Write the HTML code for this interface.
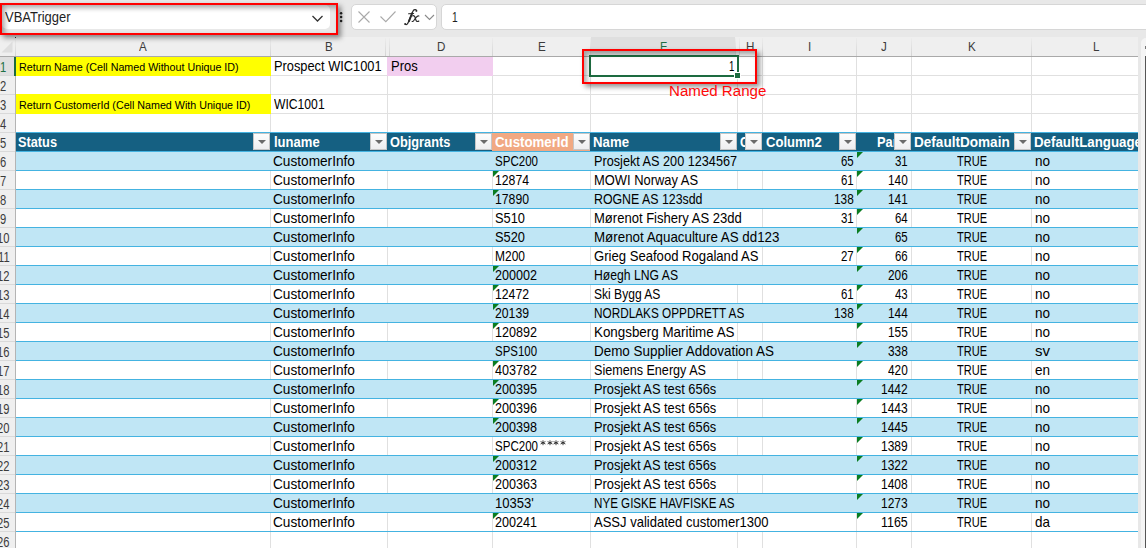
<!DOCTYPE html><html><head><meta charset="utf-8"><style>
*{margin:0;padding:0;box-sizing:border-box}
html,body{width:1146px;height:548px;overflow:hidden;background:#fff}
body{position:relative;font-family:"Liberation Sans",sans-serif;color:#000}
.a{position:absolute}
.t{position:absolute;white-space:nowrap;line-height:19px;transform-origin:0 0}
.hl{position:absolute;height:1px}
.vl{position:absolute;width:1px}
.fb{position:absolute;width:17px;height:17px;border:1px solid #c6c6c6;background:linear-gradient(#fdfdfd,#eeeef0)}
.fb:after{content:"";position:absolute;left:3.6px;top:6.2px;border-left:4.1px solid transparent;border-right:4.1px solid transparent;border-top:4.6px solid #6b6b6b}
.tri{position:absolute;width:0;height:0;border-top:6px solid #0a7d22;border-right:6px solid transparent}
</style></head><body>

<div class="a" style="left:0;top:0;width:1146px;height:37px;background:#e8e8e8"></div>
<div class="a" style="left:2px;top:5px;width:328px;height:24px;background:#fff;border-radius:5px"></div>
<div class="t" style="left:5.20px;top:8px;font-size:14.5px;transform:scaleX(0.8936);color:#1f1f1f;">VBATrigger</div>
<svg class="a" style="left:311px;top:13px" width="13" height="10" viewBox="0 0 13 10"><path d="M1.5 3 L6.5 8 L11.5 3" fill="none" stroke="#333" stroke-width="1.3"/></svg>
<svg class="a" style="left:338px;top:10px" width="6" height="15" viewBox="0 0 6 15"><circle cx="3.1" cy="3.2" r="1.25" fill="#222"/><circle cx="3.1" cy="7.1" r="1.25" fill="#222"/><circle cx="3.1" cy="11" r="1.25" fill="#222"/></svg>
<div class="a" style="left:351px;top:4px;width:86px;height:26px;background:#fff;border-radius:5px;border:1px solid #d6d6d6"></div>
<svg class="a" style="left:352px;top:4px" width="85" height="26" viewBox="0 0 85 26"><path d="M6.5 7.5 L17.5 18.5 M17.5 7.5 L6.5 18.5" stroke="#a9a9a9" stroke-width="1.1" fill="none"/><path d="M28.5 12.5 L33.8 17.6 L43.5 7.5" stroke="#a9a9a9" stroke-width="1.1" fill="none"/><path d="M73 11 L77.5 15.5 L82 11" stroke="#8a8a8a" stroke-width="1.1" fill="none"/></svg>
<svg class="a" style="left:398px;top:4px" width="40" height="26" viewBox="0 0 40 26"><g fill="none" stroke="#2a2a2a" stroke-linecap="round"><path d="M18.6 6.6 C18 5.3 15.8 5.2 14.8 7.4 L10.2 18.6 C9.3 20.8 8 21 7 20.1" stroke-width="1.2"/><path d="M14.2 9.2 L11 17.2" stroke-width="1.9"/><circle cx="18.4" cy="6.9" r="0.9" fill="#2a2a2a" stroke="none"/><circle cx="7.2" cy="20" r="0.9" fill="#2a2a2a" stroke="none"/><path d="M10.6 9.7 L15.6 9.5" stroke-width="1.1"/><path d="M14.8 11.9 C15.9 11.3 16.7 12 17.1 13.3 L17.9 16.1 C18.3 17.4 19.1 17.9 20.8 17.1" stroke-width="1.2"/><path d="M20.9 12 C19.9 11.6 19 12.3 17.9 13.7 L16.2 16 C15.4 17.2 14.7 17.9 14.1 17.3" stroke-width="1.1"/></g></svg>
<div class="a" style="left:441px;top:4px;width:720px;height:26px;background:#fff;border-radius:5px;border:1px solid #d6d6d6"></div>
<div class="t" style="left:452.30px;top:8px;font-size:14.5px;transform:scaleX(0.7037);color:#1f1f1f;">1</div>
<div class="a" style="left:0;top:37px;width:1146px;height:19px;background:#efefef"></div>
<div class="a" style="left:591px;top:37px;width:144px;height:19px;background:#dfdfdf"></div>
<svg class="a" style="left:0;top:40px" width="14" height="14" viewBox="0 0 14 14"><path d="M12.5 1.5 L12.5 12.5 L1.5 12.5 Z" fill="#dedede"/></svg>
<div class="t" style="left:139.13px;top:37px;font-size:13.5px;transform:scaleX(0.8600);color:#3b3b3b;">A</div>
<div class="t" style="left:324.63px;top:37px;font-size:13.5px;transform:scaleX(0.8600);color:#3b3b3b;">B</div>
<div class="t" style="left:436.79px;top:37px;font-size:13.5px;transform:scaleX(0.8600);color:#3b3b3b;">D</div>
<div class="t" style="left:537.63px;top:37px;font-size:13.5px;transform:scaleX(0.8600);color:#3b3b3b;">E</div>
<div class="t" style="left:659.97px;top:37px;font-size:13.5px;transform:scaleX(0.8600);color:#1d7044;">F</div>
<div class="t" style="left:746.29px;top:37px;font-size:13.5px;transform:scaleX(0.8600);color:#3b3b3b;">H</div>
<div class="t" style="left:807.87px;top:37px;font-size:13.5px;transform:scaleX(0.8600);color:#3b3b3b;">I</div>
<div class="t" style="left:881.08px;top:37px;font-size:13.5px;transform:scaleX(0.8600);color:#3b3b3b;">J</div>
<div class="t" style="left:967.63px;top:37px;font-size:13.5px;transform:scaleX(0.8600);color:#3b3b3b;">K</div>
<div class="t" style="left:1093.28px;top:37px;font-size:13.5px;transform:scaleX(0.8600);color:#3b3b3b;">L</div>
<div class="vl" style="left:15px;top:38px;height:18px;background:linear-gradient(#ececec,#d4d4d4)"></div>
<div class="vl" style="left:270px;top:38px;height:18px;background:linear-gradient(#ececec,#d4d4d4)"></div>
<div class="vl" style="left:385px;top:38px;height:18px;background:linear-gradient(#ececec,#d4d4d4)"></div>
<div class="vl" style="left:389px;top:38px;height:18px;background:linear-gradient(#ececec,#d4d4d4)"></div>
<div class="vl" style="left:492px;top:38px;height:18px;background:linear-gradient(#ececec,#d4d4d4)"></div>
<div class="vl" style="left:590px;top:38px;height:18px;background:linear-gradient(#ececec,#d4d4d4)"></div>
<div class="vl" style="left:735px;top:38px;height:18px;background:linear-gradient(#ececec,#d4d4d4)"></div>
<div class="vl" style="left:739px;top:38px;height:18px;background:linear-gradient(#ececec,#d4d4d4)"></div>
<div class="vl" style="left:762px;top:38px;height:18px;background:linear-gradient(#ececec,#d4d4d4)"></div>
<div class="vl" style="left:856px;top:38px;height:18px;background:linear-gradient(#ececec,#d4d4d4)"></div>
<div class="vl" style="left:911px;top:38px;height:18px;background:linear-gradient(#ececec,#d4d4d4)"></div>
<div class="vl" style="left:1031px;top:38px;height:18px;background:linear-gradient(#ececec,#d4d4d4)"></div>
<div class="hl" style="left:0;top:56px;width:1138px;background:#a9a9a9"></div>
<div class="a" style="left:15px;top:37px;width:1px;height:1px;background:#333"></div>
<div class="a" style="left:0;top:57px;width:15px;height:491px;background:#efefef"></div>
<div class="a" style="left:0;top:57px;width:15px;height:18px;background:#dfdfdf"></div>
<div class="a" style="left:0;top:0;width:15px;height:548px;overflow:hidden">
<div class="t" style="left:0.38px;top:58px;font-size:14px;transform:scaleX(0.8);color:#1d7044">1</div>
<div class="hl" style="left:0;top:75px;width:15px;background:#d9d9d9"></div>
<div class="t" style="left:0.38px;top:77px;font-size:14px;transform:scaleX(0.8);color:#3b3b3b">2</div>
<div class="hl" style="left:0;top:94px;width:15px;background:#d9d9d9"></div>
<div class="t" style="left:0.38px;top:96px;font-size:14px;transform:scaleX(0.8);color:#3b3b3b">3</div>
<div class="hl" style="left:0;top:113px;width:15px;background:#d9d9d9"></div>
<div class="t" style="left:0.38px;top:115px;font-size:14px;transform:scaleX(0.8);color:#3b3b3b">4</div>
<div class="hl" style="left:0;top:132px;width:15px;background:#d9d9d9"></div>
<div class="t" style="left:0.38px;top:134px;font-size:14px;transform:scaleX(0.8);color:#3b3b3b">5</div>
<div class="hl" style="left:0;top:151px;width:15px;background:#d9d9d9"></div>
<div class="t" style="left:0.38px;top:153px;font-size:14px;transform:scaleX(0.8);color:#3b3b3b">6</div>
<div class="hl" style="left:0;top:170px;width:15px;background:#d9d9d9"></div>
<div class="t" style="left:0.38px;top:172px;font-size:14px;transform:scaleX(0.8);color:#3b3b3b">7</div>
<div class="hl" style="left:0;top:189px;width:15px;background:#d9d9d9"></div>
<div class="t" style="left:0.38px;top:191px;font-size:14px;transform:scaleX(0.8);color:#3b3b3b">8</div>
<div class="hl" style="left:0;top:208px;width:15px;background:#d9d9d9"></div>
<div class="t" style="left:0.38px;top:210px;font-size:14px;transform:scaleX(0.8);color:#3b3b3b">9</div>
<div class="hl" style="left:0;top:227px;width:15px;background:#d9d9d9"></div>
<div class="t" style="left:-2.74px;top:229px;font-size:14px;transform:scaleX(0.8);color:#3b3b3b">10</div>
<div class="hl" style="left:0;top:246px;width:15px;background:#d9d9d9"></div>
<div class="t" style="left:-2.30px;top:248px;font-size:14px;transform:scaleX(0.8);color:#3b3b3b">11</div>
<div class="hl" style="left:0;top:265px;width:15px;background:#d9d9d9"></div>
<div class="t" style="left:-2.74px;top:267px;font-size:14px;transform:scaleX(0.8);color:#3b3b3b">12</div>
<div class="hl" style="left:0;top:284px;width:15px;background:#d9d9d9"></div>
<div class="t" style="left:-2.74px;top:286px;font-size:14px;transform:scaleX(0.8);color:#3b3b3b">13</div>
<div class="hl" style="left:0;top:303px;width:15px;background:#d9d9d9"></div>
<div class="t" style="left:-2.74px;top:305px;font-size:14px;transform:scaleX(0.8);color:#3b3b3b">14</div>
<div class="hl" style="left:0;top:322px;width:15px;background:#d9d9d9"></div>
<div class="t" style="left:-2.74px;top:324px;font-size:14px;transform:scaleX(0.8);color:#3b3b3b">15</div>
<div class="hl" style="left:0;top:341px;width:15px;background:#d9d9d9"></div>
<div class="t" style="left:-2.74px;top:343px;font-size:14px;transform:scaleX(0.8);color:#3b3b3b">16</div>
<div class="hl" style="left:0;top:360px;width:15px;background:#d9d9d9"></div>
<div class="t" style="left:-2.74px;top:362px;font-size:14px;transform:scaleX(0.8);color:#3b3b3b">17</div>
<div class="hl" style="left:0;top:379px;width:15px;background:#d9d9d9"></div>
<div class="t" style="left:-2.74px;top:381px;font-size:14px;transform:scaleX(0.8);color:#3b3b3b">18</div>
<div class="hl" style="left:0;top:398px;width:15px;background:#d9d9d9"></div>
<div class="t" style="left:-2.74px;top:400px;font-size:14px;transform:scaleX(0.8);color:#3b3b3b">19</div>
<div class="hl" style="left:0;top:417px;width:15px;background:#d9d9d9"></div>
<div class="t" style="left:-2.74px;top:419px;font-size:14px;transform:scaleX(0.8);color:#3b3b3b">20</div>
<div class="hl" style="left:0;top:436px;width:15px;background:#d9d9d9"></div>
<div class="t" style="left:-2.74px;top:438px;font-size:14px;transform:scaleX(0.8);color:#3b3b3b">21</div>
<div class="hl" style="left:0;top:455px;width:15px;background:#d9d9d9"></div>
<div class="t" style="left:-2.74px;top:457px;font-size:14px;transform:scaleX(0.8);color:#3b3b3b">22</div>
<div class="hl" style="left:0;top:474px;width:15px;background:#d9d9d9"></div>
<div class="t" style="left:-2.74px;top:476px;font-size:14px;transform:scaleX(0.8);color:#3b3b3b">23</div>
<div class="hl" style="left:0;top:493px;width:15px;background:#d9d9d9"></div>
<div class="t" style="left:-2.74px;top:495px;font-size:14px;transform:scaleX(0.8);color:#3b3b3b">24</div>
<div class="hl" style="left:0;top:512px;width:15px;background:#d9d9d9"></div>
<div class="t" style="left:-2.74px;top:514px;font-size:14px;transform:scaleX(0.8);color:#3b3b3b">25</div>
<div class="hl" style="left:0;top:531px;width:15px;background:#d9d9d9"></div>
<div class="t" style="left:-2.74px;top:533px;font-size:14px;transform:scaleX(0.8);color:#3b3b3b">26</div>
<div class="hl" style="left:0;top:550px;width:15px;background:#d9d9d9"></div>
</div>
<div class="vl" style="left:15px;top:57px;height:491px;background:#b4b4b4"></div>
<div class="a" style="left:14px;top:57px;width:2px;height:19px;background:#1d6b40"></div>
<div class="hl" style="left:16px;top:75px;width:1122px;background:#e0e0e0"></div>
<div class="hl" style="left:16px;top:94px;width:1122px;background:#e0e0e0"></div>
<div class="hl" style="left:16px;top:113px;width:1122px;background:#e0e0e0"></div>
<div class="hl" style="left:16px;top:132px;width:1122px;background:#e0e0e0"></div>
<div class="vl" style="left:270px;top:57px;height:491px;background:#e0e0e0"></div>
<div class="vl" style="left:387px;top:57px;height:491px;background:#e0e0e0"></div>
<div class="vl" style="left:492px;top:57px;height:491px;background:#e0e0e0"></div>
<div class="vl" style="left:590px;top:57px;height:491px;background:#e0e0e0"></div>
<div class="vl" style="left:737px;top:57px;height:491px;background:#e0e0e0"></div>
<div class="vl" style="left:762px;top:57px;height:491px;background:#e0e0e0"></div>
<div class="vl" style="left:856px;top:57px;height:491px;background:#e0e0e0"></div>
<div class="vl" style="left:911px;top:57px;height:491px;background:#e0e0e0"></div>
<div class="vl" style="left:1031px;top:57px;height:491px;background:#e0e0e0"></div>
<div class="vl" style="left:737px;top:209px;height:18px;background:#fff"></div>
<div class="vl" style="left:737px;top:247px;height:18px;background:#fff"></div>
<div class="vl" style="left:737px;top:513px;height:18px;background:#fff"></div>
<div class="vl" style="left:762px;top:513px;height:18px;background:#fff"></div>
<div class="a" style="left:16px;top:56px;width:255px;height:20px;background:#ffff00"></div>
<div class="a" style="left:16px;top:94px;width:255px;height:20px;background:#ffff00"></div>
<div class="a" style="left:387px;top:56px;width:106px;height:20px;background:#f2ceef"></div>
<div class="hl" style="left:16px;top:56px;width:1122px;background:#a9a9a9"></div>
<div class="t" style="left:19.00px;top:58px;font-size:11.5px;transform:scaleX(0.9313);">Return Name (Cell Named Without Unique ID)</div>
<div class="t" style="left:19.00px;top:96px;font-size:11.5px;transform:scaleX(0.9304);">Return CustomerId (Cell Named With Unique ID)</div>
<div class="t" style="left:273.50px;top:57px;font-size:14.5px;transform:scaleX(0.8841);">Prospect WIC1001</div>
<div class="t" style="left:390.50px;top:57px;font-size:14.5px;transform:scaleX(0.8960);">Pros</div>
<div class="t" style="left:273.50px;top:95px;font-size:14.5px;transform:scaleX(0.8377);">WIC1001</div>
<div class="t" style="left:728.70px;top:57px;font-size:14.5px;transform:scaleX(0.6667);">1</div>
<div class="a" style="left:16px;top:132px;width:1122px;height:20px;background:#156082"></div>
<div class="a" style="left:492px;top:132px;width:98px;height:20px;background:#f1a983"></div>
<div class="a" style="left:16px;top:151px;width:1122px;height:20px;background:#c0e6f5"></div>
<div class="a" style="left:16px;top:189px;width:1122px;height:20px;background:#c0e6f5"></div>
<div class="a" style="left:16px;top:227px;width:1122px;height:20px;background:#c0e6f5"></div>
<div class="a" style="left:16px;top:265px;width:1122px;height:20px;background:#c0e6f5"></div>
<div class="a" style="left:16px;top:303px;width:1122px;height:20px;background:#c0e6f5"></div>
<div class="a" style="left:16px;top:341px;width:1122px;height:20px;background:#c0e6f5"></div>
<div class="a" style="left:16px;top:379px;width:1122px;height:20px;background:#c0e6f5"></div>
<div class="a" style="left:16px;top:417px;width:1122px;height:20px;background:#c0e6f5"></div>
<div class="a" style="left:16px;top:455px;width:1122px;height:20px;background:#c0e6f5"></div>
<div class="a" style="left:16px;top:493px;width:1122px;height:20px;background:#c0e6f5"></div>
<div class="hl" style="left:16px;top:132px;width:1122px;background:#44b3e1"></div>
<div class="hl" style="left:16px;top:151px;width:1122px;background:#44b3e1"></div>
<div class="hl" style="left:16px;top:170px;width:1122px;background:#44b3e1"></div>
<div class="hl" style="left:16px;top:189px;width:1122px;background:#44b3e1"></div>
<div class="hl" style="left:16px;top:208px;width:1122px;background:#44b3e1"></div>
<div class="hl" style="left:16px;top:227px;width:1122px;background:#44b3e1"></div>
<div class="hl" style="left:16px;top:246px;width:1122px;background:#44b3e1"></div>
<div class="hl" style="left:16px;top:265px;width:1122px;background:#44b3e1"></div>
<div class="hl" style="left:16px;top:284px;width:1122px;background:#44b3e1"></div>
<div class="hl" style="left:16px;top:303px;width:1122px;background:#44b3e1"></div>
<div class="hl" style="left:16px;top:322px;width:1122px;background:#44b3e1"></div>
<div class="hl" style="left:16px;top:341px;width:1122px;background:#44b3e1"></div>
<div class="hl" style="left:16px;top:360px;width:1122px;background:#44b3e1"></div>
<div class="hl" style="left:16px;top:379px;width:1122px;background:#44b3e1"></div>
<div class="hl" style="left:16px;top:398px;width:1122px;background:#44b3e1"></div>
<div class="hl" style="left:16px;top:417px;width:1122px;background:#44b3e1"></div>
<div class="hl" style="left:16px;top:436px;width:1122px;background:#44b3e1"></div>
<div class="hl" style="left:16px;top:455px;width:1122px;background:#44b3e1"></div>
<div class="hl" style="left:16px;top:474px;width:1122px;background:#44b3e1"></div>
<div class="hl" style="left:16px;top:493px;width:1122px;background:#44b3e1"></div>
<div class="hl" style="left:16px;top:512px;width:1122px;background:#44b3e1"></div>
<div class="hl" style="left:16px;top:531px;width:1122px;background:#44b3e1"></div>
<div class="a" style="left:16px;top:0;width:1122px;height:548px;overflow:hidden">
<div class="t" style="left:2.40px;top:133px;font-size:14.5px;font-weight:bold;color:#fff;transform:scaleX(0.8804)">Status</div>
<div class="t" style="left:257.60px;top:133px;font-size:14.5px;font-weight:bold;color:#fff;transform:scaleX(0.8996)">luname</div>
<div class="t" style="left:374.30px;top:133px;font-size:14.5px;font-weight:bold;color:#fff;transform:scaleX(0.8803)">Objgrants</div>
<div class="t" style="left:479.40px;top:133px;font-size:14.5px;font-weight:bold;color:#fff;transform:scaleX(0.9132)">CustomerId</div>
<div class="t" style="left:577.30px;top:133px;font-size:14.5px;font-weight:bold;color:#fff;transform:scaleX(0.9114)">Name</div>
<div class="a" style="left:0;top:0;width:730px;height:548px;overflow:hidden">
<div class="t" style="left:724.40px;top:133px;font-size:14.5px;font-weight:bold;color:#fff;transform:scaleX(0.8387)">Column1</div>
</div>
<div class="t" style="left:749.60px;top:133px;font-size:14.5px;font-weight:bold;color:#fff;transform:scaleX(0.9000)">Column2</div>
<div class="a" style="left:0;top:0;width:878px;height:548px;overflow:hidden">
<div class="t" style="left:861.30px;top:133px;font-size:14.5px;font-weight:bold;color:#fff;transform:scaleX(0.8869)">Parent</div>
</div>
<div class="t" style="left:898.00px;top:133px;font-size:14.5px;font-weight:bold;color:#fff;transform:scaleX(0.9355)">DefaultDomain</div>
<div class="t" style="left:1018.10px;top:133px;font-size:14.5px;font-weight:bold;color:#fff;transform:scaleX(0.9184)">DefaultLanguage</div>
</div>
<div class="fb" style="left:253px;top:133px"></div>
<div class="fb" style="left:370px;top:133px"></div>
<div class="fb" style="left:475px;top:133px"></div>
<div class="fb" style="left:573px;top:133px"></div>
<div class="fb" style="left:720px;top:133px"></div>
<div class="fb" style="left:745px;top:133px"></div>
<div class="fb" style="left:839px;top:133px"></div>
<div class="fb" style="left:894px;top:133px"></div>
<div class="fb" style="left:1014px;top:133px"></div>
<div class="t" style="left:273.40px;top:152px;font-size:14.5px;transform:scaleX(0.9414);">CustomerInfo</div>
<div class="t" style="left:495.00px;top:152px;font-size:14.5px;transform:scaleX(0.7963);">SPC200</div>
<div class="t" style="left:593.50px;top:152px;font-size:14.5px;transform:scaleX(0.8741);">Prosjekt AS 200 1234567</div>
<div class="t" style="left:840.70px;top:152px;font-size:14.5px;transform:scaleX(0.7888);">65</div>
<div class="t" style="left:895.40px;top:152px;font-size:14.5px;transform:scaleX(0.7888);">31</div>
<div class="t" style="left:956.60px;top:152px;font-size:14.5px;transform:scaleX(0.7595);">TRUE</div>
<div class="t" style="left:1034.60px;top:152px;font-size:14.5px;transform:scaleX(0.9317);">no</div>
<div class="tri" style="left:857px;top:152px"></div>
<div class="t" style="left:273.40px;top:171px;font-size:14.5px;transform:scaleX(0.9414);">CustomerInfo</div>
<div class="t" style="left:495.00px;top:171px;font-size:14.5px;transform:scaleX(0.8437);">12874</div>
<div class="t" style="left:593.50px;top:171px;font-size:14.5px;transform:scaleX(0.8904);">MOWI Norway AS</div>
<div class="t" style="left:840.70px;top:171px;font-size:14.5px;transform:scaleX(0.7888);">61</div>
<div class="t" style="left:888.40px;top:171px;font-size:14.5px;transform:scaleX(0.8140);">140</div>
<div class="t" style="left:956.60px;top:171px;font-size:14.5px;transform:scaleX(0.7595);">TRUE</div>
<div class="t" style="left:1034.60px;top:171px;font-size:14.5px;transform:scaleX(0.9317);">no</div>
<div class="tri" style="left:493px;top:171px"></div>
<div class="tri" style="left:857px;top:171px"></div>
<div class="t" style="left:273.40px;top:190px;font-size:14.5px;transform:scaleX(0.9414);">CustomerInfo</div>
<div class="t" style="left:495.00px;top:190px;font-size:14.5px;transform:scaleX(0.8437);">17890</div>
<div class="t" style="left:593.50px;top:190px;font-size:14.5px;transform:scaleX(0.8515);">ROGNE AS 123sdd</div>
<div class="t" style="left:833.70px;top:190px;font-size:14.5px;transform:scaleX(0.8140);">138</div>
<div class="t" style="left:888.40px;top:190px;font-size:14.5px;transform:scaleX(0.8140);">141</div>
<div class="t" style="left:956.60px;top:190px;font-size:14.5px;transform:scaleX(0.7595);">TRUE</div>
<div class="t" style="left:1034.60px;top:190px;font-size:14.5px;transform:scaleX(0.9317);">no</div>
<div class="tri" style="left:493px;top:190px"></div>
<div class="tri" style="left:857px;top:190px"></div>
<div class="t" style="left:273.40px;top:209px;font-size:14.5px;transform:scaleX(0.9414);">CustomerInfo</div>
<div class="t" style="left:495.00px;top:209px;font-size:14.5px;transform:scaleX(0.8850);">S510</div>
<div class="t" style="left:593.50px;top:209px;font-size:14.5px;transform:scaleX(0.8990);">Mørenot Fishery AS 23dd</div>
<div class="t" style="left:840.70px;top:209px;font-size:14.5px;transform:scaleX(0.7888);">31</div>
<div class="t" style="left:895.40px;top:209px;font-size:14.5px;transform:scaleX(0.7888);">64</div>
<div class="t" style="left:956.60px;top:209px;font-size:14.5px;transform:scaleX(0.7595);">TRUE</div>
<div class="t" style="left:1034.60px;top:209px;font-size:14.5px;transform:scaleX(0.9317);">no</div>
<div class="tri" style="left:857px;top:209px"></div>
<div class="t" style="left:273.40px;top:228px;font-size:14.5px;transform:scaleX(0.9414);">CustomerInfo</div>
<div class="t" style="left:495.00px;top:228px;font-size:14.5px;transform:scaleX(0.8850);">S520</div>
<div class="t" style="left:593.50px;top:228px;font-size:14.5px;transform:scaleX(0.9201);">Mørenot Aquaculture AS dd123</div>
<div class="t" style="left:895.40px;top:228px;font-size:14.5px;transform:scaleX(0.7888);">65</div>
<div class="t" style="left:956.60px;top:228px;font-size:14.5px;transform:scaleX(0.7595);">TRUE</div>
<div class="t" style="left:1034.60px;top:228px;font-size:14.5px;transform:scaleX(0.9317);">no</div>
<div class="tri" style="left:857px;top:228px"></div>
<div class="t" style="left:273.40px;top:247px;font-size:14.5px;transform:scaleX(0.9414);">CustomerInfo</div>
<div class="t" style="left:495.00px;top:247px;font-size:14.5px;transform:scaleX(0.8264);">M200</div>
<div class="t" style="left:593.50px;top:247px;font-size:14.5px;transform:scaleX(0.9034);">Grieg Seafood Rogaland AS</div>
<div class="t" style="left:840.70px;top:247px;font-size:14.5px;transform:scaleX(0.7888);">27</div>
<div class="t" style="left:895.40px;top:247px;font-size:14.5px;transform:scaleX(0.7888);">66</div>
<div class="t" style="left:956.60px;top:247px;font-size:14.5px;transform:scaleX(0.7595);">TRUE</div>
<div class="t" style="left:1034.60px;top:247px;font-size:14.5px;transform:scaleX(0.9317);">no</div>
<div class="tri" style="left:857px;top:247px"></div>
<div class="t" style="left:273.40px;top:266px;font-size:14.5px;transform:scaleX(0.9414);">CustomerInfo</div>
<div class="t" style="left:495.00px;top:266px;font-size:14.5px;transform:scaleX(0.8678);">200002</div>
<div class="t" style="left:593.50px;top:266px;font-size:14.5px;transform:scaleX(0.8408);">Høegh LNG AS</div>
<div class="t" style="left:888.40px;top:266px;font-size:14.5px;transform:scaleX(0.8140);">206</div>
<div class="t" style="left:956.60px;top:266px;font-size:14.5px;transform:scaleX(0.7595);">TRUE</div>
<div class="t" style="left:1034.60px;top:266px;font-size:14.5px;transform:scaleX(0.9317);">no</div>
<div class="tri" style="left:493px;top:266px"></div>
<div class="tri" style="left:857px;top:266px"></div>
<div class="t" style="left:273.40px;top:285px;font-size:14.5px;transform:scaleX(0.9414);">CustomerInfo</div>
<div class="t" style="left:495.00px;top:285px;font-size:14.5px;transform:scaleX(0.8437);">12472</div>
<div class="t" style="left:593.50px;top:285px;font-size:14.5px;transform:scaleX(0.8321);">Ski Bygg AS</div>
<div class="t" style="left:840.70px;top:285px;font-size:14.5px;transform:scaleX(0.7888);">61</div>
<div class="t" style="left:895.40px;top:285px;font-size:14.5px;transform:scaleX(0.7888);">43</div>
<div class="t" style="left:956.60px;top:285px;font-size:14.5px;transform:scaleX(0.7595);">TRUE</div>
<div class="t" style="left:1034.60px;top:285px;font-size:14.5px;transform:scaleX(0.9317);">no</div>
<div class="tri" style="left:493px;top:285px"></div>
<div class="tri" style="left:857px;top:285px"></div>
<div class="t" style="left:273.40px;top:304px;font-size:14.5px;transform:scaleX(0.9414);">CustomerInfo</div>
<div class="t" style="left:495.00px;top:304px;font-size:14.5px;transform:scaleX(0.8437);">20139</div>
<div class="t" style="left:593.50px;top:304px;font-size:14.5px;transform:scaleX(0.8120);">NORDLAKS OPPDRETT AS</div>
<div class="t" style="left:833.70px;top:304px;font-size:14.5px;transform:scaleX(0.8140);">138</div>
<div class="t" style="left:888.40px;top:304px;font-size:14.5px;transform:scaleX(0.8140);">144</div>
<div class="t" style="left:956.60px;top:304px;font-size:14.5px;transform:scaleX(0.7595);">TRUE</div>
<div class="t" style="left:1034.60px;top:304px;font-size:14.5px;transform:scaleX(0.9317);">no</div>
<div class="tri" style="left:493px;top:304px"></div>
<div class="tri" style="left:857px;top:304px"></div>
<div class="t" style="left:273.40px;top:323px;font-size:14.5px;transform:scaleX(0.9414);">CustomerInfo</div>
<div class="t" style="left:495.00px;top:323px;font-size:14.5px;transform:scaleX(0.8678);">120892</div>
<div class="t" style="left:593.50px;top:323px;font-size:14.5px;transform:scaleX(0.9225);">Kongsberg Maritime AS</div>
<div class="t" style="left:888.40px;top:323px;font-size:14.5px;transform:scaleX(0.8140);">155</div>
<div class="t" style="left:956.60px;top:323px;font-size:14.5px;transform:scaleX(0.7595);">TRUE</div>
<div class="t" style="left:1034.60px;top:323px;font-size:14.5px;transform:scaleX(0.9317);">no</div>
<div class="tri" style="left:493px;top:323px"></div>
<div class="tri" style="left:857px;top:323px"></div>
<div class="t" style="left:273.40px;top:342px;font-size:14.5px;transform:scaleX(0.9414);">CustomerInfo</div>
<div class="t" style="left:495.00px;top:342px;font-size:14.5px;transform:scaleX(0.7895);">SPS100</div>
<div class="t" style="left:593.50px;top:342px;font-size:14.5px;transform:scaleX(0.9264);">Demo Supplier Addovation AS</div>
<div class="t" style="left:888.40px;top:342px;font-size:14.5px;transform:scaleX(0.8140);">338</div>
<div class="t" style="left:956.60px;top:342px;font-size:14.5px;transform:scaleX(0.7595);">TRUE</div>
<div class="t" style="left:1034.60px;top:342px;font-size:14.5px;transform:scaleX(1.0345);">sv</div>
<div class="tri" style="left:857px;top:342px"></div>
<div class="t" style="left:273.40px;top:361px;font-size:14.5px;transform:scaleX(0.9414);">CustomerInfo</div>
<div class="t" style="left:495.00px;top:361px;font-size:14.5px;transform:scaleX(0.8678);">403782</div>
<div class="t" style="left:593.50px;top:361px;font-size:14.5px;transform:scaleX(0.8682);">Siemens Energy AS</div>
<div class="t" style="left:888.40px;top:361px;font-size:14.5px;transform:scaleX(0.8140);">420</div>
<div class="t" style="left:956.60px;top:361px;font-size:14.5px;transform:scaleX(0.7595);">TRUE</div>
<div class="t" style="left:1034.60px;top:361px;font-size:14.5px;transform:scaleX(0.9317);">en</div>
<div class="tri" style="left:493px;top:361px"></div>
<div class="tri" style="left:857px;top:361px"></div>
<div class="t" style="left:273.40px;top:380px;font-size:14.5px;transform:scaleX(0.9414);">CustomerInfo</div>
<div class="t" style="left:495.00px;top:380px;font-size:14.5px;transform:scaleX(0.8678);">200395</div>
<div class="t" style="left:593.50px;top:380px;font-size:14.5px;transform:scaleX(0.8868);">Prosjekt AS test 656s</div>
<div class="t" style="left:881.40px;top:380px;font-size:14.5px;transform:scaleX(0.8266);">1442</div>
<div class="t" style="left:956.60px;top:380px;font-size:14.5px;transform:scaleX(0.7595);">TRUE</div>
<div class="t" style="left:1034.60px;top:380px;font-size:14.5px;transform:scaleX(0.9317);">no</div>
<div class="tri" style="left:493px;top:380px"></div>
<div class="tri" style="left:857px;top:380px"></div>
<div class="t" style="left:273.40px;top:399px;font-size:14.5px;transform:scaleX(0.9414);">CustomerInfo</div>
<div class="t" style="left:495.00px;top:399px;font-size:14.5px;transform:scaleX(0.8678);">200396</div>
<div class="t" style="left:593.50px;top:399px;font-size:14.5px;transform:scaleX(0.8868);">Prosjekt AS test 656s</div>
<div class="t" style="left:881.40px;top:399px;font-size:14.5px;transform:scaleX(0.8266);">1443</div>
<div class="t" style="left:956.60px;top:399px;font-size:14.5px;transform:scaleX(0.7595);">TRUE</div>
<div class="t" style="left:1034.60px;top:399px;font-size:14.5px;transform:scaleX(0.9317);">no</div>
<div class="tri" style="left:493px;top:399px"></div>
<div class="tri" style="left:857px;top:399px"></div>
<div class="t" style="left:273.40px;top:418px;font-size:14.5px;transform:scaleX(0.9414);">CustomerInfo</div>
<div class="t" style="left:495.00px;top:418px;font-size:14.5px;transform:scaleX(0.8678);">200398</div>
<div class="t" style="left:593.50px;top:418px;font-size:14.5px;transform:scaleX(0.8868);">Prosjekt AS test 656s</div>
<div class="t" style="left:881.40px;top:418px;font-size:14.5px;transform:scaleX(0.8266);">1445</div>
<div class="t" style="left:956.60px;top:418px;font-size:14.5px;transform:scaleX(0.7595);">TRUE</div>
<div class="t" style="left:1034.60px;top:418px;font-size:14.5px;transform:scaleX(0.9317);">no</div>
<div class="tri" style="left:493px;top:418px"></div>
<div class="tri" style="left:857px;top:418px"></div>
<div class="t" style="left:273.40px;top:437px;font-size:14.5px;transform:scaleX(0.9414);">CustomerInfo</div>
<div class="t" style="left:495.00px;top:437px;font-size:14.5px;transform:scaleX(0.7963);">SPC200</div>
<div class="t" style="left:593.50px;top:437px;font-size:14.5px;transform:scaleX(0.8868);">Prosjekt AS test 656s</div>
<div class="t" style="left:881.40px;top:437px;font-size:14.5px;transform:scaleX(0.8266);">1389</div>
<div class="t" style="left:956.60px;top:437px;font-size:14.5px;transform:scaleX(0.7595);">TRUE</div>
<div class="t" style="left:1034.60px;top:437px;font-size:14.5px;transform:scaleX(0.9317);">no</div>
<svg class="a" style="left:540.4px;top:440px" width="6" height="6" viewBox="0 0 6 6"><path d="M3 0.3 L3 5.2 M0.6 1.6 L5.4 4 M5.4 1.6 L0.6 4" stroke="#222" stroke-width="0.85"/></svg>
<svg class="a" style="left:546.9px;top:440px" width="6" height="6" viewBox="0 0 6 6"><path d="M3 0.3 L3 5.2 M0.6 1.6 L5.4 4 M5.4 1.6 L0.6 4" stroke="#222" stroke-width="0.85"/></svg>
<svg class="a" style="left:553.4px;top:440px" width="6" height="6" viewBox="0 0 6 6"><path d="M3 0.3 L3 5.2 M0.6 1.6 L5.4 4 M5.4 1.6 L0.6 4" stroke="#222" stroke-width="0.85"/></svg>
<svg class="a" style="left:559.9px;top:440px" width="6" height="6" viewBox="0 0 6 6"><path d="M3 0.3 L3 5.2 M0.6 1.6 L5.4 4 M5.4 1.6 L0.6 4" stroke="#222" stroke-width="0.85"/></svg>
<div class="tri" style="left:857px;top:437px"></div>
<div class="t" style="left:273.40px;top:456px;font-size:14.5px;transform:scaleX(0.9414);">CustomerInfo</div>
<div class="t" style="left:495.00px;top:456px;font-size:14.5px;transform:scaleX(0.8678);">200312</div>
<div class="t" style="left:593.50px;top:456px;font-size:14.5px;transform:scaleX(0.8868);">Prosjekt AS test 656s</div>
<div class="t" style="left:881.40px;top:456px;font-size:14.5px;transform:scaleX(0.8266);">1322</div>
<div class="t" style="left:956.60px;top:456px;font-size:14.5px;transform:scaleX(0.7595);">TRUE</div>
<div class="t" style="left:1034.60px;top:456px;font-size:14.5px;transform:scaleX(0.9317);">no</div>
<div class="tri" style="left:493px;top:456px"></div>
<div class="tri" style="left:857px;top:456px"></div>
<div class="t" style="left:273.40px;top:475px;font-size:14.5px;transform:scaleX(0.9414);">CustomerInfo</div>
<div class="t" style="left:495.00px;top:475px;font-size:14.5px;transform:scaleX(0.8678);">200363</div>
<div class="t" style="left:593.50px;top:475px;font-size:14.5px;transform:scaleX(0.8868);">Prosjekt AS test 656s</div>
<div class="t" style="left:881.40px;top:475px;font-size:14.5px;transform:scaleX(0.8266);">1408</div>
<div class="t" style="left:956.60px;top:475px;font-size:14.5px;transform:scaleX(0.7595);">TRUE</div>
<div class="t" style="left:1034.60px;top:475px;font-size:14.5px;transform:scaleX(0.9317);">no</div>
<div class="tri" style="left:493px;top:475px"></div>
<div class="tri" style="left:857px;top:475px"></div>
<div class="t" style="left:273.40px;top:494px;font-size:14.5px;transform:scaleX(0.9414);">CustomerInfo</div>
<div class="t" style="left:495.00px;top:494px;font-size:14.5px;transform:scaleX(0.9002);">10353'</div>
<div class="t" style="left:593.50px;top:494px;font-size:14.5px;transform:scaleX(0.8010);">NYE GISKE HAVFISKE AS</div>
<div class="t" style="left:881.40px;top:494px;font-size:14.5px;transform:scaleX(0.8266);">1273</div>
<div class="t" style="left:956.60px;top:494px;font-size:14.5px;transform:scaleX(0.7595);">TRUE</div>
<div class="t" style="left:1034.60px;top:494px;font-size:14.5px;transform:scaleX(0.9317);">no</div>
<div class="tri" style="left:857px;top:494px"></div>
<div class="t" style="left:273.40px;top:513px;font-size:14.5px;transform:scaleX(0.9414);">CustomerInfo</div>
<div class="t" style="left:495.00px;top:513px;font-size:14.5px;transform:scaleX(0.8678);">200241</div>
<div class="t" style="left:593.50px;top:513px;font-size:14.5px;transform:scaleX(0.8980);">ASSJ validated customer1300</div>
<div class="t" style="left:881.40px;top:513px;font-size:14.5px;transform:scaleX(0.8558);">1165</div>
<div class="t" style="left:956.60px;top:513px;font-size:14.5px;transform:scaleX(0.7595);">TRUE</div>
<div class="t" style="left:1034.60px;top:513px;font-size:14.5px;transform:scaleX(0.9259);">da</div>
<div class="tri" style="left:493px;top:513px"></div>
<div class="tri" style="left:857px;top:513px"></div>
<div class="a" style="left:589px;top:55px;width:150px;height:22px;border:2px solid #1d6b40"></div>
<div class="a" style="left:734px;top:72px;width:7px;height:7px;background:#1d6b40;border:1px solid #fff"></div>
<div class="a" style="left:1138px;top:37px;width:8px;height:511px;background:#e8e8e8"></div>
<div class="a" style="left:1141px;top:38px;width:10px;height:520px;background:#f4f4f4;border-radius:5px 0 0 0"></div>
<div class="a" style="left:1145px;top:46px;width:1px;height:3px;background:#777"></div>
<div class="a" style="left:1145px;top:56px;width:1px;height:492px;background:#555"></div>
<div class="a" style="left:0;top:3px;width:338px;height:32px;border:2px solid #ff0000;box-shadow:3px 3px 5px rgba(0,0,0,.42), inset 3px 3px 5px rgba(0,0,0,.32)"></div>
<div class="a" style="left:582px;top:49px;width:175px;height:35px;border:2px solid #ff0000;box-shadow:3px 3px 5px rgba(0,0,0,.42), inset 3px 3px 5px rgba(0,0,0,.32)"></div>
<div class="t" style="left:668.90px;top:82px;font-size:14px;transform:scaleX(1.0786);color:#ff0a0a;">Named Range</div>
</body></html>
